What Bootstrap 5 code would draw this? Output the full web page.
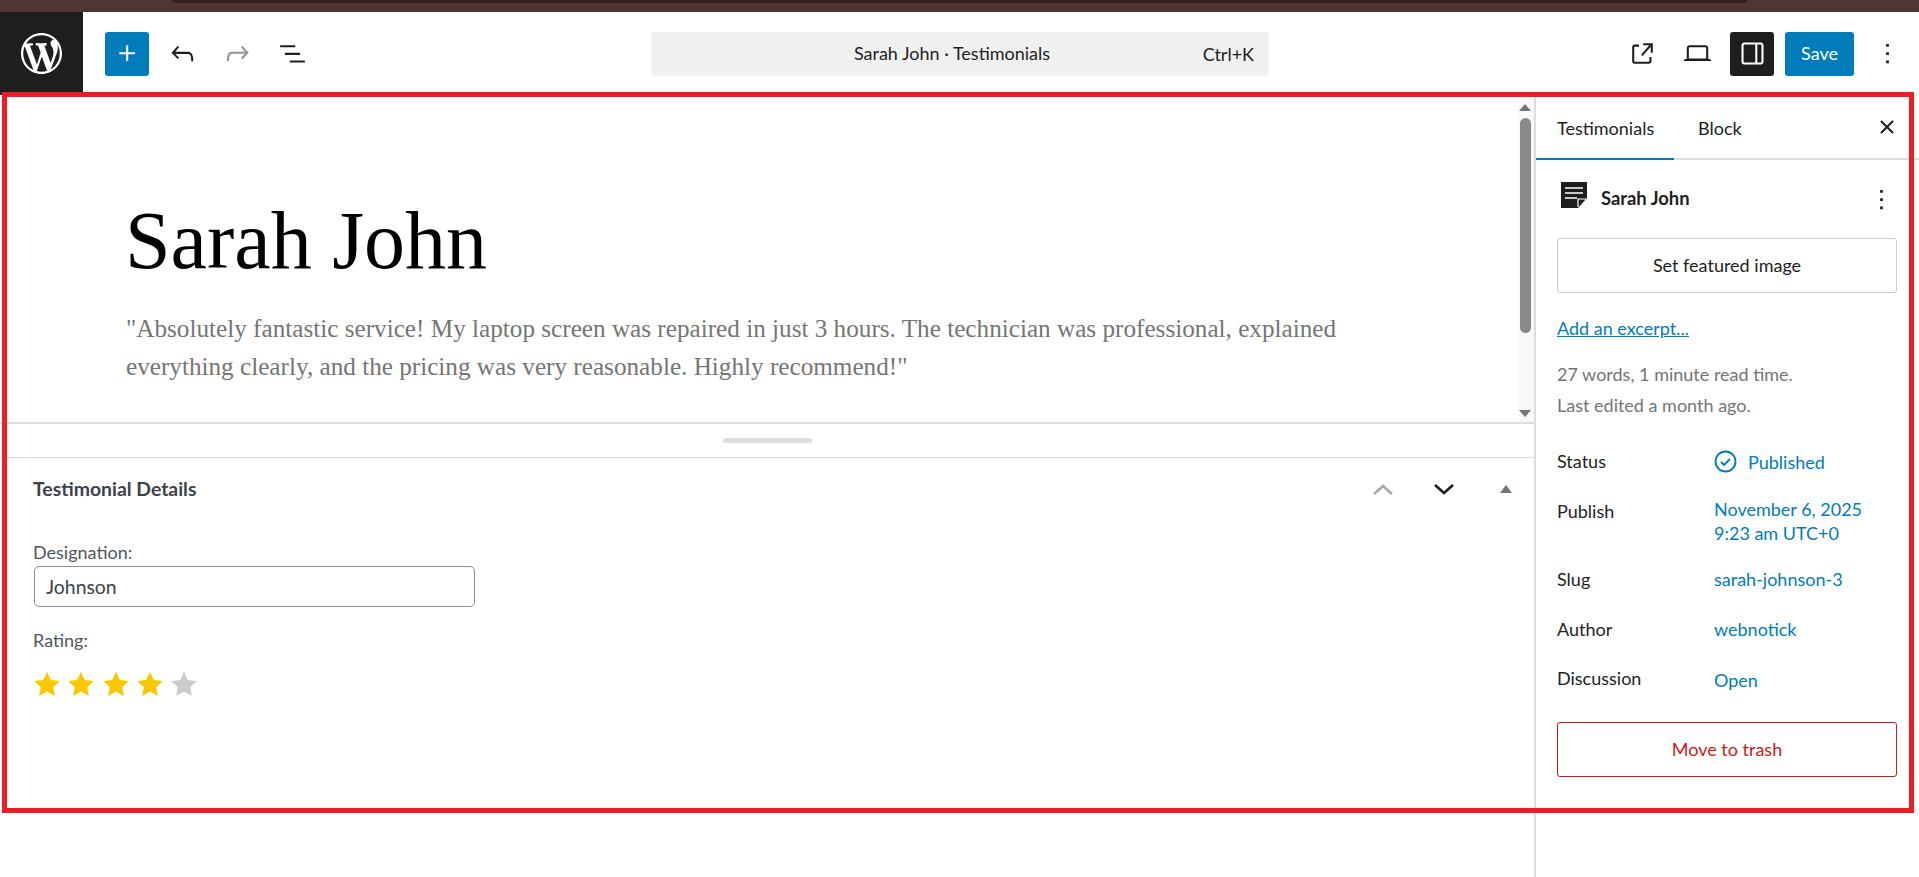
<!DOCTYPE html>
<html lang="en"><head><meta charset="utf-8"><title>Sarah John</title>
<link href="https://cdn.jsdelivr.net/npm/bootstrap@5.3.0/dist/css/bootstrap.min.css" rel="stylesheet">
<style>
html,body{height:877px;overflow:hidden;background:#fff}
body{font-family:Lato,"Open Sans",sans-serif;font-size:18px;color:#1e1e1e;position:relative}
svg{display:block;flex:none}
.strip{height:12px;background:#4f3533;display:flex;justify-content:center}
.strip-tab{width:1575px;height:3px;background:#33201e;border-radius:0 0 8px 8px}
.wp-head{height:83px;background:#fff}
.wp-logo{width:83px;height:83px;background:#1e1e1e}
.tool-btn{width:44px;height:44px;padding:0;border:0;border-radius:3px;display:flex;align-items:center;justify-content:center;background:transparent;color:#1e1e1e}
.tool-btn.is-blue{background:#007cba;color:#fff}
.tool-btn.is-dark{background:#1e1e1e;color:#fff}
.tools-left{margin-left:22px;gap:11px;width:546px}
.cmd-box{width:618px;height:44px;background:#f0f0f0;border-radius:4px;position:relative;font-size:18px;color:#1e1e1e}
.cmd-title{margin-right:16px}
.cmd-key{position:absolute;right:15px;top:11px;line-height:22px}
.tools-right{margin-left:auto;gap:11px;padding-right:10px}
.save-btn{width:69px;height:44px;padding:0;border:0;border-radius:3px;background:#007cba;color:#fff;font-size:18px}
.wp-main{height:782px}
.wp-left{width:1534px;flex:none}
.canvas-wrap{height:329px;position:relative;border-bottom:2px solid #ddd}
.canvas-body{padding:106px 0 0 125px;width:1519px}
.post-title{font-family:"Liberation Serif",serif;font-size:82px;line-height:80px;color:#000;margin:0 0 29px;font-weight:400}
.post-text{font-family:"Liberation Serif",serif;font-size:25.2px;line-height:38px;color:#757575;margin:0 0 0 1px;width:1270px}
.sb-track{position:absolute;right:0;top:0;bottom:0;width:15px;background:#f9f9f9}
.sb-thumb{position:absolute;left:1px;top:23px;width:11px;height:215px;background:#8a8a8a;border-radius:6px}
.sb-up,.sb-down{position:absolute;left:0;width:0;height:0;border-left:6px solid transparent;border-right:6px solid transparent}
.sb-up{top:9px;border-bottom:7px solid #757575}
.sb-down{top:315px;border-top:7px solid #757575}
.grip-row{height:34px;border-bottom:1px solid #ddd;display:flex;align-items:center;justify-content:center}
.grip-bar{width:89px;height:5px;background:#ddd;border-radius:3px;margin-left:1px}
.meta-head{height:62px;padding:0 0 0 33px;position:relative}
.meta-title{font-size:19.4px;font-weight:700;color:#3c434a;margin:0}
.meta-ctl{margin-left:auto;width:162px;padding-right:22px}
.meta-tri{width:0;height:0;border-left:6px solid transparent;border-right:6px solid transparent;border-bottom:8px solid #6c7781;margin-left:45px}
.meta-body{padding:21px 0 0 34px;color:#50575e}
.fld-label{display:block;line-height:22px;font-size:18px;margin:0 0 3px -1px}
.fld-input{width:441px;height:41px;border:1px solid #8c8f94;border-radius:5px;padding:0 11px;font-size:19.4px;color:#3c434a;box-shadow:none}
.rate-label{margin-top:22px}
.stars{gap:8.3px;margin-top:20px}
.wp-side{width:385px;flex:none;border-left:2px solid #ddd}
.side-tabs{height:65px;border-bottom:2px solid #ddd;position:relative;flex-wrap:nowrap}
.side-tab{display:block;height:65px;padding:0 0 0 21px;line-height:67px;color:#1e1e1e;text-decoration:none}
.side-tab.is-on{border-bottom:2px solid #007cba;width:138px}
.side-tab.is-plain{padding-left:24px}
.side-close{position:absolute;right:10px;top:10px}
.side-body{padding:24px 22px 0 21px}
.doc-row{height:30px}
.doc-icon{margin:-8px 0 0 4px}
.doc-name{font-weight:700;margin-left:14px;font-size:18.4px}
.doc-more{margin-left:auto;margin-right:-6px}
.outline-btn{display:block;width:100%;height:55px;padding:0;border:1px solid #ccc;border-radius:3px;background:#fff;color:#1e1e1e;font-size:18px;text-align:center}
.feat-btn{margin-top:24px}
.exc-link{display:block;color:#007cba;text-decoration:underline;margin-top:24px;line-height:22px}
.gray-line{color:#757575;line-height:31px;margin:0}
.words{margin-top:20px}
.info-row{display:flex;line-height:22px}
.info-key{width:157px;flex:none}
.info-val{color:#007cba;display:flex;align-items:center;gap:11px}
.val-two{display:block;line-height:24px;margin-top:-1px}
.row-status{margin-top:29px}
.row-publish{margin-top:25px}
.row-publish .info-key{padding-top:2px}
.row-slug{margin-top:23px}
.row-author{margin-top:28px}
.row-disc{margin-top:27px}
.row-disc .info-val{padding-top:2px}
.trash-btn{border-color:#cc1818;color:#cc1818;margin-top:31px}
.red-frame{position:absolute;left:2px;top:92px;width:1912px;height:721px;border:5px solid #ee1c25;pointer-events:none}
</style></head>
<body>
<div class="strip"><div class="strip-tab"></div></div>
<header class="wp-head d-flex align-items-center">
  <div class="wp-logo d-flex align-items-center justify-content-center">
    <svg width="41" height="41" viewBox="0 0 20 20" fill="#fff"><path d="M20 10c0-5.51-4.49-10-10-10C4.48 0 0 4.49 0 10c0 5.52 4.48 10 10 10 5.51 0 10-4.48 10-10zM7.78 15.37L4.37 6.22c.55-.02 1.17-.08 1.17-.08.5-.06.44-1.13-.06-1.11 0 0-1.45.11-2.37.11-.18 0-.37 0-.58-.01C4.12 2.69 6.87 1.11 10 1.11c2.33 0 4.45.87 6.05 2.34-.68-.11-1.65.39-1.65 1.58 0 .74.45 1.36.9 2.1.35.61.55 1.36.55 2.46 0 1.49-1.4 5-1.4 5l-3.03-8.37c.54-.02.82-.17.82-.17.5-.05.44-1.25-.06-1.22 0 0-1.44.12-2.38.12-.87 0-2.33-.12-2.33-.12-.5-.03-.56 1.2-.06 1.22l.92.08 1.26 3.41zM17.41 10c.24-.64.74-1.87.43-4.25.7 1.29 1.05 2.71 1.05 4.25 0 3.29-1.73 6.24-4.4 7.78.97-2.59 1.94-5.2 2.92-7.78zM6.1 18.09C3.12 16.65 1.11 13.53 1.11 10c0-1.3.23-2.48.72-3.59C3.25 10.3 4.67 14.2 6.1 18.09zm4.03-6.63l2.58 6.98c-.86.29-1.76.45-2.71.45-.79 0-1.57-.11-2.29-.33.81-2.38 1.62-4.74 2.42-7.1z"/></svg>
  </div>
  <div class="tools-left d-flex align-items-center">
    <button class="tool-btn is-blue" aria-label="Add"><svg width="33" height="33" viewBox="0 0 24 24" fill="currentColor"><path d="M11 12.5V17.5H12.5V12.5H17.5V11H12.5V6H11V11H6V12.5H11Z"/></svg></button>
    <button class="tool-btn" aria-label="Undo"><svg width="33" height="33" viewBox="0 0 24 24" fill="currentColor"><path d="M18.3 11.7c-.6-.6-1.4-.9-2.3-.9H6.7l2.9-3.3-1.1-1-4.5 5L8.5 16l1-1-2.7-2.7H16c.5 0 .9.2 1.3.5 1 1 1 3.4 1 4.5v.3h1.5v-.2c0-1.5 0-4.3-1.5-5.7z"/></svg></button>
    <button class="tool-btn" aria-label="Redo"><svg width="33" height="33" viewBox="0 0 24 24" fill="#949494"><path d="M15.6 6.5l-1.1 1 2.9 3.3H8c-.9 0-1.7.3-2.3.9-1.4 1.5-1.4 4.2-1.4 5.6v.2h1.5v-.3c0-1.1 0-3.5 1-4.5.3-.3.7-.5 1.3-.5h9.2L14.5 15l1.1 1.1 4.6-4.6-4.6-5z"/></svg></button>
    <button class="tool-btn" aria-label="List view"><svg width="33" height="33" viewBox="0 0 24 24" fill="currentColor"><path d="M3 6h11v1.5H3V6Zm3.5 5.5h11V13h-11v-1.5ZM21 17H10v1.5h11V17Z"/></svg></button>
  </div>
  <div class="cmd-box d-flex align-items-center justify-content-center">
    <span class="cmd-title">Sarah John · Testimonials</span><span class="cmd-key">Ctrl+K</span>
  </div>
  <div class="tools-right d-flex align-items-center">
    <button class="tool-btn" aria-label="View"><svg width="33" height="33" viewBox="0 0 24 24" fill="currentColor"><path d="M19.5 4.5h-7V6h4.44l-5.97 6.84 1.06 1.06L18 7.06v4.44h1.5v-7Zm-13 1a2 2 0 0 0-2 2v10a2 2 0 0 0 2 2h10a2 2 0 0 0 2-2v-3H17v3a.5.5 0 0 1-.5.5h-10a.5.5 0 0 1-.5-.5v-10a.5.5 0 0 1 .5-.5h3V5.5h-3Z"/></svg></button>
    <button class="tool-btn" aria-label="Device"><svg width="33" height="33" viewBox="0 0 24 24" fill="currentColor"><path d="M20.5 16h-.7V8c0-1.1-.9-2-2-2H6.2c-1.1 0-2 .9-2 2v8h-.7c-.8 0-1.5.7-1.5 1.5h20c0-.8-.7-1.5-1.5-1.5zM5.7 8c0-.3.2-.5.5-.5h11.6c.3 0 .5.2.5.5v7.6H5.7V8z"/></svg></button>
    <button class="tool-btn is-dark" aria-label="Settings"><svg width="33" height="33" viewBox="0 0 24 24" fill="currentColor"><path d="M18 4H6c-1.1 0-2 .9-2 2v12c0 1.1.9 2 2 2h12c1.1 0 2-.9 2-2V6c0-1.1-.9-2-2-2zm-4 14.5H6c-.3 0-.5-.2-.5-.5V6c0-.3.2-.5.5-.5h8v13zm4.5-.5c0 .3-.2.5-.5.5h-2.5v-13H18c.3 0 .5.2.5.5v12z"/></svg></button>
    <button class="save-btn">Save</button>
    <button class="tool-btn" aria-label="Options"><svg width="33" height="33" viewBox="0 0 24 24" fill="currentColor"><path d="M13 19h-2v-2h2v2zm0-6h-2v-2h2v2zm0-6h-2V5h2v2z"/></svg></button>
  </div>
</header>
<main class="wp-main d-flex">
  <div class="wp-left">
    <section class="canvas-wrap">
      <div class="canvas-body">
        <h1 class="post-title">Sarah John</h1>
        <p class="post-text">"Absolutely fantastic service! My laptop screen was repaired in just 3 hours. The technician was professional, explained everything clearly, and the pricing was very reasonable. Highly recommend!"</p>
      </div>
      <div class="sb-track"><div class="sb-up"></div><div class="sb-thumb"></div><div class="sb-down"></div></div>
    </section>
    <div class="grip-row"><div class="grip-bar"></div></div>
    <section>
      <div class="meta-head d-flex align-items-center">
        <h2 class="meta-title">Testimonial Details</h2>
        <div class="meta-ctl d-flex align-items-center">
          <svg width="22" height="14" viewBox="0 0 22 14" fill="none" stroke="#a7aaad" stroke-width="2.6"><path d="M2 12 11 4l9 8"/></svg>
          <svg width="22" height="14" viewBox="0 0 22 14" fill="none" stroke="#1e1e1e" stroke-width="2.6" class="ms-auto"><path d="M2 3l9 8 9-8"/></svg>
          <div class="meta-tri"></div>
        </div>
      </div>
      <div class="meta-body">
        <label class="fld-label" for="desig">Designation:</label>
        <input id="desig" class="form-control fld-input" value="Johnson">
        <div class="fld-label rate-label">Rating:</div>
        <div class="stars d-flex">
          <svg width="26" height="26" viewBox="0 0 24 24" fill="#f8c800"><path d="M12 .6l3.5 7.6 8.3 1-6.1 5.7 1.6 8.2L12 19l-7.3 4.1 1.6-8.2L.2 9.2l8.3-1z"/></svg>
          <svg width="26" height="26" viewBox="0 0 24 24" fill="#f8c800"><path d="M12 .6l3.5 7.6 8.3 1-6.1 5.7 1.6 8.2L12 19l-7.3 4.1 1.6-8.2L.2 9.2l8.3-1z"/></svg>
          <svg width="26" height="26" viewBox="0 0 24 24" fill="#f8c800"><path d="M12 .6l3.5 7.6 8.3 1-6.1 5.7 1.6 8.2L12 19l-7.3 4.1 1.6-8.2L.2 9.2l8.3-1z"/></svg>
          <svg width="26" height="26" viewBox="0 0 24 24" fill="#f8c800"><path d="M12 .6l3.5 7.6 8.3 1-6.1 5.7 1.6 8.2L12 19l-7.3 4.1 1.6-8.2L.2 9.2l8.3-1z"/></svg>
          <svg width="26" height="26" viewBox="0 0 24 24" fill="#ccc"><path d="M12 .6l3.5 7.6 8.3 1-6.1 5.7 1.6 8.2L12 19l-7.3 4.1 1.6-8.2L.2 9.2l8.3-1z"/></svg>
        </div>
      </div>
    </section>
  </div>
  <aside class="wp-side">
    <nav class="side-tabs nav">
      <a class="side-tab is-on" href="#">Testimonials</a>
      <a class="side-tab is-plain" href="#">Block</a>
      <button class="tool-btn side-close" aria-label="Close"><svg width="14" height="14" viewBox="0 0 14 14" fill="none" stroke="currentColor" stroke-width="2"><path d="M1 1l12 12M13 1 1 13"/></svg></button>
    </nav>
    <div class="side-body">
      <div class="doc-row d-flex align-items-center">
        <svg class="doc-icon" width="26" height="26" viewBox="0 0 26 26"><path d="M0 0h26v16l-9 10H0z" fill="#1e1e1e"/><path d="M4 6h18M4 11h18M4 16h12" stroke="#fff" stroke-width="1.5"/><path d="M17 25v-8h8" fill="none" stroke="#fff" stroke-width="1.2"/></svg>
        <span class="doc-name">Sarah John</span>
        <button class="tool-btn doc-more" aria-label="Actions"><svg width="33" height="33" viewBox="0 0 24 24" fill="currentColor"><path d="M13 19h-2v-2h2v2zm0-6h-2v-2h2v2zm0-6h-2V5h2v2z"/></svg></button>
      </div>
      <button class="outline-btn feat-btn">Set featured image</button>
      <a class="exc-link" href="#">Add an excerpt...</a>
      <p class="gray-line words">27 words, 1 minute read time.</p>
      <p class="gray-line">Last edited a month ago.</p>
      <div class="info-row row-status"><div class="info-key">Status</div><div class="info-val"><svg width="23" height="23" viewBox="0 0 23 23" fill="none" stroke="#007cba" stroke-width="1.9"><circle cx="11.5" cy="11.5" r="10"/><path d="M7 12l3 3 6-6"/></svg>Published</div></div>
      <div class="info-row row-publish"><div class="info-key">Publish</div><div class="info-val val-two">November 6, 2025<br>9:23 am UTC+0</div></div>
      <div class="info-row row-slug"><div class="info-key">Slug</div><div class="info-val">sarah-johnson-3</div></div>
      <div class="info-row row-author"><div class="info-key">Author</div><div class="info-val">webnotick</div></div>
      <div class="info-row row-disc"><div class="info-key">Discussion</div><div class="info-val">Open</div></div>
      <button class="outline-btn trash-btn">Move to trash</button>
    </div>
  </aside>
</main>
<div class="red-frame"></div>
</body></html>
